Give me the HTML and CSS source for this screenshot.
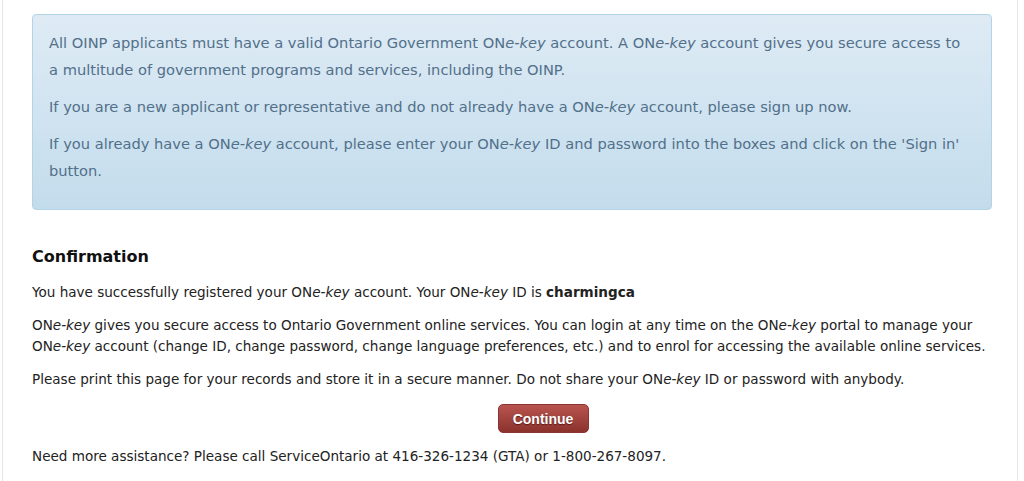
FILE: index.html
```html
<!DOCTYPE html>
<html lang="en">
<head>
    <meta charset="UTF-8">
    <meta name="viewport" content="width=device-width, initial-scale=1.0">
    <title>ONe-key Confirmation</title>
    <link rel="stylesheet" href="styles.css">
</head>
<body>
    <div class="page">
        <div class="info-box">
            <p>All OINP applicants must have a valid Ontario Government ON<em>e-key</em> account. A ON<em>e-key</em> account gives you secure access to a multitude of government programs and services, including the OINP.</p>
            <p>If you are a new applicant or representative and do not already have a ON<em>e-key</em> account, please sign up now.</p>
            <p>If you already have a ON<em>e-key</em> account, please enter your ON<em>e-key</em> ID and password into the boxes and click on the 'Sign in' button.</p>
        </div>

        <h2>Confirmation</h2>
        <p>You have successfully registered your ON<em>e-key</em> account. Your ON<em>e-key</em> ID is <strong>charmingca</strong></p>
        <p>ON<em>e-key</em> gives you secure access to Ontario Government online services. You can login at any time on the ON<em>e-key</em> portal to manage your ON<em>e-key</em> account (change ID, change password, change language preferences, etc.) and to enrol for accessing the available online services.</p>
        <p>Please print this page for your records and store it in a secure manner. Do not share your ON<em>e-key</em> ID or password with anybody.</p>
        <div class="actions">
            <button class="btn-continue">Continue</button>
        </div>
        <p class="help">Need more assistance? Please call ServiceOntario at 416-326-1234 (GTA) or 1-800-267-8097.</p>
    </div>
</body>
</html>
```

FILE: styles.css
```css
body {
    font-family: "DejaVu Sans", Verdana, sans-serif;
    font-size: 13.55px;
    color: #222;
    margin: 0;
    padding: 0;
    background: #fff;
}
.page {
    margin: 0 6px 0 2px;
    padding: 14px 25px 10px 29px;
    border-left: 1px solid #e6e6e6;
    border-right: 1px solid #e6e6e6;
    min-height: 457px;
}
.info-box {
    border: 1px solid #b5d3e6;
    border-radius: 4px;
    background: linear-gradient(to bottom, #deebf5, #c3dcec);
    color: #52708a;
    font-size: 14.65px;
    padding: 14px 24px 25px 16px;
}
.info-box p {
    line-height: 27px;
    margin: 0 0 10px 0;
}
.info-box p:last-child {
    margin-bottom: 0;
}
h2 {
    font-size: 16px;
    line-height: 19px;
    color: #111;
    margin: 37px 0 16px 0;
}
p {
    line-height: 21px;
    margin: 0 0 12px 0;
}
.actions {
    text-align: center;
    margin: 14px 0 13px 0;
    line-height: 0;
}
.btn-continue {
    font-family: "Liberation Sans", Arial, sans-serif;
    font-weight: bold;
    font-size: 14px;
    color: #fff;
    text-shadow: 0 1px 1px #5a1a17;
    width: 91px;
    height: 29px;
    margin-left: 62px;
    border: 1px solid #8a3531;
    border-radius: 5px;
    background: linear-gradient(to bottom, #b9544f, #8b322d);
    cursor: pointer;
}
.help {
    margin: 0;
}
```
